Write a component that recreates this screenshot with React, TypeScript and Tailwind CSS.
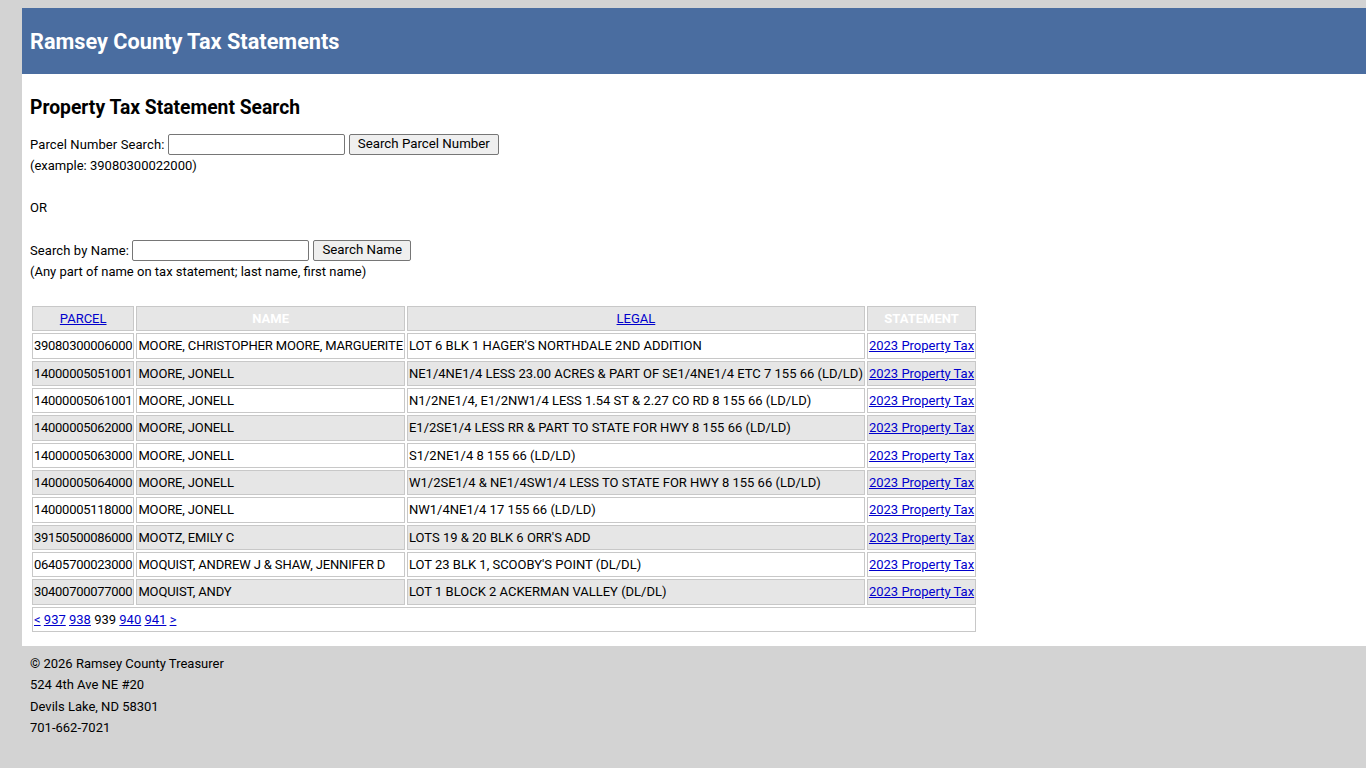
const ROWS = [
  { parcel: '39080300006000', name: 'MOORE, CHRISTOPHER MOORE, MARGUERITE', legal: "LOT 6 BLK 1 HAGER'S NORTHDALE 2ND ADDITION" },
  { parcel: '14000005051001', name: 'MOORE, JONELL', legal: 'NE1/4NE1/4 LESS 23.00 ACRES & PART OF SE1/4NE1/4 ETC 7 155 66 (LD/LD)' },
  { parcel: '14000005061001', name: 'MOORE, JONELL', legal: 'N1/2NE1/4, E1/2NW1/4 LESS 1.54 ST & 2.27 CO RD 8 155 66 (LD/LD)' },
  { parcel: '14000005062000', name: 'MOORE, JONELL', legal: 'E1/2SE1/4 LESS RR & PART TO STATE FOR HWY 8 155 66 (LD/LD)' },
  { parcel: '14000005063000', name: 'MOORE, JONELL', legal: 'S1/2NE1/4 8 155 66 (LD/LD)' },
  { parcel: '14000005064000', name: 'MOORE, JONELL', legal: 'W1/2SE1/4 & NE1/4SW1/4 LESS TO STATE FOR HWY 8 155 66 (LD/LD)' },
  { parcel: '14000005118000', name: 'MOORE, JONELL', legal: 'NW1/4NE1/4 17 155 66 (LD/LD)' },
  { parcel: '39150500086000', name: 'MOOTZ, EMILY C', legal: "LOTS 19 & 20 BLK 6 ORR'S ADD" },
  { parcel: '06405700023000', name: 'MOQUIST, ANDREW J & SHAW, JENNIFER D', legal: "LOT 23 BLK 1, SCOOBY'S POINT (DL/DL)" },
  { parcel: '30400700077000', name: 'MOQUIST, ANDY', legal: 'LOT 1 BLOCK 2 ACKERMAN VALLEY (DL/DL)' },
];

const link = 'text-[#0000cc] underline';
const cell = 'border border-[#c8c8c8] px-px h-[25.33px] whitespace-nowrap';
const btn = 'ml-1 h-[21px] px-[8px] bg-[#efefef] border border-[#767676] rounded-[2px] text-[13.3px] leading-none';

export default function App() {
  return (
    <div className="min-h-[768px] bg-[#d3d3d3] pl-[22px] pt-2 text-[13px] leading-[21px] text-black font-['Roboto',sans-serif]">
      <header className="bg-[#4a6da0] h-[66px] flex items-center px-2">
        <h1 className="text-white text-[21.7px] font-bold">Ramsey County Tax Statements</h1>
      </header>

      <main className="bg-white px-2 pt-[22px] pb-3">
        <h2 className="text-[19.3px] font-bold leading-[24px] mb-[13px]">Property Tax Statement Search</h2>

        <div className="flex items-center h-[22px]">
          <span className="tracking-[0.1px]">Parcel Number Search:&nbsp;</span>
          <input className="w-[177px] h-[21px] border border-[#767676] rounded-[2px] px-1" />
          <button className={btn}>Search Parcel Number</button>
        </div>
        <div>(example: 39080300022000)</div>
        <div className="h-[21px]" />
        <div>OR</div>
        <div className="h-[21px]" />
        <div className="flex items-center h-[22px]">
          <span className="tracking-[0.1px]">Search by Name:&nbsp;</span>
          <input className="w-[177px] h-[21px] border border-[#767676] rounded-[2px] px-1" />
          <button className={btn}>Search Name</button>
        </div>
        <div>(Any part of name on tax statement; last name, first name)</div>

        <table className="mt-[22px] border-separate border-spacing-[2px]">
          <thead>
            <tr className="bg-[#e6e6e6]">
              <th className={`${cell} font-normal`}><a href="#" className={link}>PARCEL</a></th>
              <th className={`${cell} text-white`}>NAME</th>
              <th className={`${cell} font-normal`}><a href="#" className={link}>LEGAL</a></th>
              <th className={`${cell} text-white`}>STATEMENT</th>
            </tr>
          </thead>
          <tbody>
            {ROWS.map((r, i) => (
              <tr key={r.parcel} className={i % 2 ? 'bg-[#e6e6e6]' : 'bg-white'}>
                <td className={`${cell} tracking-[-0.28px]`}>{r.parcel}</td>
                <td className={`${cell} tracking-[-0.14px]`}>{r.name}</td>
                <td className={cell}>{r.legal}</td>
                <td className={cell}><a href="#" className={link}>2023 Property Tax</a></td>
              </tr>
            ))}
            <tr>
              <td colSpan={4} className={cell}>
                <a href="#" className={link}>&lt;</a>{' '}
                <a href="#" className={link}>937</a>{' '}
                <a href="#" className={link}>938</a>{' '}
                939{' '}
                <a href="#" className={link}>940</a>{' '}
                <a href="#" className={link}>941</a>{' '}
                <a href="#" className={link}>&gt;</a>
              </td>
            </tr>
          </tbody>
        </table>
      </main>

      <footer className="px-2 pt-[7px] leading-[21.5px]">
        <div>© 2026 Ramsey County Treasurer</div>
        <div>524 4th Ave NE #20</div>
        <div>Devils Lake, ND 58301</div>
        <div>701-662-7021</div>
      </footer>
    </div>
  );
}
